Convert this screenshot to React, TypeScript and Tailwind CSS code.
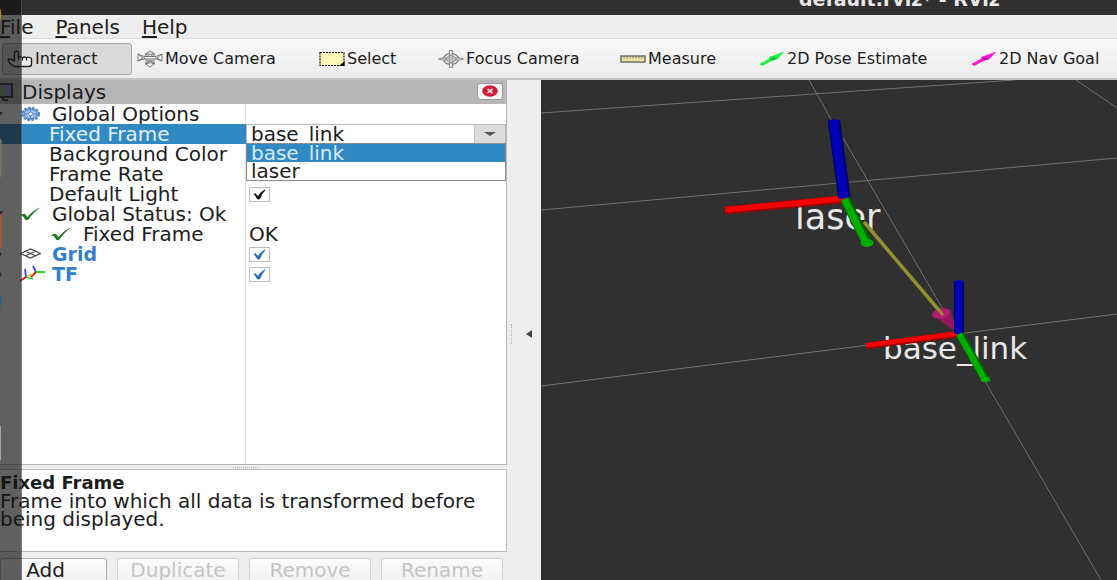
import { useState, type ReactNode } from "react";

function HandIcon() {
  return (
    <svg width="26" height="18" viewBox="0 0 26 18" fill="#eee" stroke="#222" strokeWidth="1.4" strokeLinejoin="round">
      <path d="M7.500 16.500Q5 15.500 1.500 11.500Q0.500 9 3 9L7.500 11V2.500Q9.500 -0.500 11.500 2.500V8Q13.500 5.500 15.500 8Q17.500 6 19.500 8Q21.500 6 24.500 8.500V14Q24.500 16.500 22 16.500Z" />
      <path d="M11.500 7V10M15.500 8V10.500M19.500 8V10.500" fill="none" strokeWidth="1.100" />
    </svg>
  );
}

function MoveIcon() {
  return (
    <svg width="26" height="18" viewBox="0 0 26 18" fill="#f4f4f4" stroke="#7a7a7a" strokeWidth="1">
      <path d="M13 1L18 4H15V7H11V4H8ZM13 17L18 13.500H15V11H11V13.500H8Z" />
      <path d="M1 4L7 6.500H19L25 4V11L19 9H7L1 11Z" />
      <path d="M1 4L6 8L1 11M25 4L20 8L25 11" fill="none" />
      <ellipse cx="13" cy="7.500" rx="6" ry="3.500" fill="none" />
      <path d="M8 12Q13 14 18 12" fill="none" />
    </svg>
  );
}

function SelectIcon() {
  return (
    <svg width="26" height="18" viewBox="0 0 26 18">
      <rect x="1" y="2.500" width="24" height="13" fill="#fcf6b8" stroke="#111" strokeWidth="1.200" strokeDasharray="2 1" />
      <path d="M25.500 11V16H20Z" fill="#000" />
    </svg>
  );
}

function FocusIcon() {
  return (
    <svg width="26" height="18" viewBox="0 0 26 18" fill="none" stroke="#888">
      <ellipse cx="13" cy="9" rx="7.500" ry="5.500" strokeWidth="1.400" />
      <ellipse cx="13" cy="9" rx="4.500" ry="3.200" />
      <path d="M11.500 0.500H14.500V5H11.500ZM11.500 13H14.500V17.500H11.500ZM0.500 9L4 8H8V10H4ZM25.500 9L22 8H18V10H22Z" fill="#eee" />
      <path d="M11.500 5.500V12.500M14.500 5.500V12.500M8 8H18M8 10H18" strokeWidth="0.800" />
    </svg>
  );
}

function MeasureIcon() {
  return (
    <svg width="26" height="18" viewBox="0 0 26 18">
      <rect x="1" y="6" width="24" height="6" fill="#efe3a6" stroke="#666" strokeWidth="1.400" />
      <path d="M4 6V8.500M7 6V8.500M10 6V8.500M13 6V8.500M16 6V8.500M19 6V8.500M22 6V8.500" stroke="#777" />
    </svg>
  );
}

function ArrowIcon({ light, dark }: { light: string; dark: string }) {
  return (
    <svg width="26" height="18" viewBox="0 0 26 18">
      <path d="M0.500 14L10.500 8.500L10 7L25.500 1.500L18 9.500L13.500 10.500L3 16Z" fill={light} />
      <path d="M11 8.500L15 7L17 9L13.500 10.500Z" fill={dark} />
    </svg>
  );
}

function GearIcon() {
  return (
    <svg width="21" height="16" viewBox="0 0 21 16">
      <ellipse cx="10.500" cy="8" rx="8.500" ry="6.200" fill="#8fb4e3" stroke="#4d83ca" strokeWidth="2" strokeDasharray="2.500 1.500" />
      <ellipse cx="10.500" cy="8" rx="6.500" ry="4.600" fill="#a8c6ec" stroke="#4d83ca" />
      <ellipse cx="10.500" cy="8" rx="2.500" ry="1.900" fill="#fff" stroke="#4d83ca" />
      <path d="M4 8H8M13 8H17M10.500 3.500V6M10.500 10V12.500" stroke="#4d83ca" />
    </svg>
  );
}

function TickIcon() {
  return (
    <svg width="21" height="16" viewBox="0 0 21 16">
      <path d="M0 9.500Q3 7 5 8L7.500 11Q13 4 20.500 1.500Q13 6.500 8.500 13.500Q6.500 15 5 13.500Q3.500 9.500 0 9.500Z" fill="#217a21" />
    </svg>
  );
}

function GridIcon() {
  return (
    <svg width="21" height="16" viewBox="0 0 21 16" fill="none" stroke="#444" strokeWidth="1.200">
      <path d="M0.500 7.500L10.500 3L20.500 7.500L10.500 12ZM5.500 5.300L15.500 9.700M15.500 5.300L5.500 9.700" />
    </svg>
  );
}

function TfIcon() {
  return (
    <svg width="25" height="18" viewBox="0 0 25 18" strokeWidth="1.800" fill="none">
      <path d="M6 12L5 4M16 7L13 1" stroke="#3a3aff" />
      <path d="M6 12L13 14M16 7H25" stroke="#1ee01e" />
      <path d="M6 12L0 16M16 7L11 12" stroke="#e01010" />
      <path d="M7 11L13 9" stroke="#e6c832" />
    </svg>
  );
}

function MonitorIcon() {
  return (
    <svg width="18" height="20" viewBox="0 0 18 20">
      <rect x="-1" y="2" width="13" height="13" fill="#9a93c4" stroke="#111" strokeWidth="1.500" />
      <path d="M0 4H4V13H0Z" fill="#7fb37a" />
      <path d="M3 15V18H8" stroke="#111" strokeWidth="1.500" fill="none" />
    </svg>
  );
}

const tools: { label: string; width: string; icon: ReactNode }[] = [
  { label: "Interact", width: "w-[130px]", icon: <HandIcon /> },
  { label: "Move Camera", width: "w-[182px]", icon: <MoveIcon /> },
  { label: "Select", width: "w-[119px]", icon: <SelectIcon /> },
  { label: "Focus Camera", width: "w-[182px]", icon: <FocusIcon /> },
  { label: "Measure", width: "w-[139px]", icon: <MeasureIcon /> },
  { label: "2D Pose Estimate", width: "w-[212px]", icon: <ArrowIcon light="#1df23c" dark="#0fae2c" /> },
  { label: "2D Nav Goal", width: "w-[150px]", icon: <ArrowIcon light="#ff14d8" dark="#b3109c" /> },
];

function Toolbar() {
  const [active, setActive] = useState("Interact");
  return (
    <div className="flex h-[42px] shrink-0 items-center border-t border-b-2 border-t-[#dcdcdc] border-b-[#c4c4c4] bg-gradient-to-b from-[#f9f9f9] to-[#ececec] pl-0.5">
      {tools.map((t) => (
        <button
          key={t.label}
          type="button"
          aria-pressed={active === t.label}
          onClick={() => setActive(t.label)}
          className={`${t.width} flex h-8 shrink-0 items-center gap-0.5 rounded-[3px] border pl-1 text-[16px] whitespace-nowrap ${
            active === t.label ? "border-[#a5a5a5] bg-[#dadada]" : "border-transparent"
          }`}
        >
          {t.icon}
          {t.label}
        </button>
      ))}
    </div>
  );
}

function Check({ label, dark }: { label: string; dark?: boolean }) {
  const [on, setOn] = useState(true);
  return (
    <label className="ml-[3px] grid h-[15px] w-[21px]">
      <input
        type="checkbox"
        aria-label={label}
        checked={on}
        onChange={() => setOn(!on)}
        className="col-start-1 row-start-1 h-[15px] w-[21px] appearance-none border border-[#bdbdbd] bg-white"
      />
      {on && (
        <svg width="21" height="15" viewBox="0 0 21 15" className="pointer-events-none col-start-1 row-start-1">
          <path d="M5 7L6.500 6.800L9 9.500Q11.500 5 16 2.800Q12.500 7 10.500 12H8.500Q7 9 5 7Z" fill={dark ? "#111" : "#2468ad"} stroke={dark ? "#111" : "#2468ad"} strokeWidth="0.800" />
        </svg>
      )}
    </label>
  );
}

function Row({ name, value, icon, indent, selected, bold }: {
  name: string;
  value?: ReactNode;
  icon?: ReactNode;
  indent: string;
  selected?: boolean;
  bold?: boolean;
}) {
  return (
    <div role="row" className="grid h-5 shrink-0 grid-cols-[246px_1fr]">
      <div
        role="gridcell"
        className={`flex items-center border-r leading-5 whitespace-nowrap ${indent} ${
          selected ? "border-[#3189c4] bg-[#3189c4] text-[#e4f0f8]" : "border-[#e2e2e2]"
        }`}
      >
        {icon && <span className="flex w-8 shrink-0">{icon}</span>}
        <span className={bold ? "text-[19px] font-bold text-[#337fcd]" : ""}>{name}</span>
      </div>
      <div role="gridcell" className="flex items-center leading-5">{value}</div>
    </div>
  );
}

function FrameSelect() {
  const [frame, setFrame] = useState("base_link");
  return (
    <div className="relative h-full w-full">
      <div className="flex h-full w-full border border-[#b8b8b8] bg-white">
        <select
          aria-label="Fixed Frame"
          value={frame}
          onChange={(e) => setFrame(e.target.value)}
          className="h-[18px] min-w-0 flex-1 appearance-none bg-white pl-1 leading-[18px]"
        >
          <option>base_link</option>
          <option>laser</option>
        </select>
        <span className="pointer-events-none flex w-[31px] items-center justify-center border-l border-[#c4c4c4] bg-[#dcdcdc]">
          <svg width="12" height="4" viewBox="0 0 12 4"><path d="M0 0H12L6 4Z" fill="#555" /></svg>
        </span>
      </div>
      <ul role="listbox" aria-label="Frames" className="absolute top-[19px] right-0 left-0 z-10 border border-[#8c8c8c] bg-white">
        {["base_link", "laser"].map((f) => (
          <li
            key={f}
            role="option"
            aria-selected={f === frame}
            onClick={() => setFrame(f)}
            className={`h-[18px] pl-1 leading-[18px] ${f === frame ? "bg-[#3189c4] text-[#d9eaf6]" : ""}`}
          >
            {f}
          </li>
        ))}
      </ul>
    </div>
  );
}

function Displays() {
  return (
    <section className="flex w-[507px] shrink-0 flex-col text-[20px]">
      <header className="flex h-6 shrink-0 items-center bg-[#b7b7b7] pr-1">
        <span className="flex w-[22px]"><MonitorIcon /></span>
        <h2 className="flex-1 leading-6">Displays</h2>
        <button type="button" aria-label="Close Displays" className="mb-0.5 flex h-[17px] w-[26px] items-center justify-center rounded-[3px] border border-[#999] bg-[#f6f6f6]">
          <svg width="16" height="12" viewBox="0 0 16 12">
            <ellipse cx="8" cy="6" rx="7.800" ry="5.700" fill="#cf1b37" />
            <path d="M5.500 4L10.500 8M10.500 4L5.500 8" stroke="#f6cfd5" strokeWidth="1.800" />
          </svg>
        </button>
      </header>
      <div role="treegrid" aria-label="Displays" className="flex min-h-0 flex-1 flex-col border-r border-b border-[#b5b5b5] bg-white">
        <Row name="Global Options" indent="pl-5" icon={<GearIcon />} />
        <Row name="Fixed Frame" indent="pl-[49px]" selected value={<FrameSelect />} />
        <Row name="Background Color" indent="pl-[49px]" />
        <Row name="Frame Rate" indent="pl-[49px]" />
        <Row name="Default Light" indent="pl-[49px]" value={<Check label="Default Light" dark />} />
        <Row name="Global Status: Ok" indent="pl-5" icon={<TickIcon />} />
        <Row name="Fixed Frame" indent="pl-[51px]" icon={<TickIcon />} value={<span className="pl-[3px]">OK</span>} />
        <Row name="Grid" indent="pl-5" icon={<GridIcon />} bold value={<Check label="Grid" />} />
        <Row name="TF" indent="pl-5" icon={<TfIcon />} bold value={<Check label="TF" />} />
        <div className="w-[246px] flex-1 border-r border-[#e2e2e2]" />
      </div>
      <div className="flex h-1 shrink-0 items-center justify-center pr-4">
        <span className="w-[25px] border-t border-dotted border-[#aaa]" />
      </div>
      <div className="h-[83px] shrink-0 overflow-hidden border border-l-0 border-[#bcbcbc] bg-white pt-1 leading-[18px] whitespace-nowrap">
        <h3 className="text-[18px] font-bold">Fixed Frame</h3>
        <p>Frame into which all data is transformed before<br />being displayed.</p>
      </div>
      <div className="grid h-7 shrink-0 grid-cols-[107px_repeat(3,1fr)] gap-2.5 overflow-hidden pt-1.5 pr-1">
        {["Add", "Duplicate", "Remove", "Rename"].map((b, i) => (
          <button
            key={b}
            type="button"
            disabled={i > 0}
            className={`flex h-7 items-center justify-center rounded-[3px] border bg-gradient-to-b from-[#fcfcfc] to-[#efefef] pb-1 ${
              i > 0 ? "border-[#cfcfcf] text-[#c4c4c4]" : "border-[#adadad] pr-4"
            }`}
          >
            {b}
          </button>
        ))}
      </div>
    </section>
  );
}

function Scene() {
  return (
    <main className="min-w-0 flex-1 overflow-hidden bg-[#303030]">
      <svg className="h-full w-full" viewBox="541 80 576 500" preserveAspectRatio="xMinYMin slice">
        <g stroke="#717171" strokeWidth="1" fill="none">
          <path d="M541 113L1015 80M541 210L1117 158M541 386L1117 314M809 80L832 121M843 138L1101 580M1076 80L1117 108" />
        </g>
        <g fill="#e8e8e8" fontFamily="'DejaVu Sans', sans-serif">
          <text x="795" y="229" fontSize="35">laser</text>
          <text x="883" y="359" fontSize="31">base_link</text>
        </g>
        <path d="M864 222L943 315" stroke="#92902f" strokeWidth="3.500" />
        <path d="M932 314L950 309L957 333Z" fill="#95155f" />
        <ellipse cx="941" cy="313.500" rx="9" ry="5" fill="#b51a75" transform="rotate(-12 941 313.500)" />
        <path d="M937 308L943 315" stroke="#92902f" strokeWidth="3" />
        <g fill="none">
          <path d="M725 210.500L846 199" stroke="#a00000" strokeWidth="8" />
          <path d="M725 209.700L846 198.200" stroke="#f40000" strokeWidth="5.500" />
          <path d="M834 121L844.500 198" stroke="#00006e" strokeWidth="12.500" />
          <path d="M833.500 121L844 198" stroke="#0000b8" strokeWidth="9" />
          <path d="M845 199L867 243" stroke="#006800" strokeWidth="10" />
          <path d="M844.500 199L866 243" stroke="#00ae00" strokeWidth="7" />
          <path d="M866 346L959 334" stroke="#a00000" strokeWidth="6.500" />
          <path d="M866 345.300L959 333.300" stroke="#f40000" strokeWidth="4.500" />
          <path d="M959 282L959 334" stroke="#00006e" strokeWidth="10" />
          <path d="M958.500 282L958.500 334" stroke="#0000b8" strokeWidth="7" />
          <path d="M959.500 334L986 380" stroke="#006800" strokeWidth="8.500" />
          <path d="M959 334L985 380" stroke="#00ae00" strokeWidth="6" />
        </g>
        <ellipse cx="834" cy="121" rx="6" ry="1.800" fill="#0000b8" />
        <ellipse cx="867" cy="243" rx="6.500" ry="4" fill="#00ae00" />
        <ellipse cx="959" cy="282" rx="5" ry="1.800" fill="#0000b8" />
        <ellipse cx="985.500" cy="379.500" rx="4.800" ry="2.800" fill="#00ae00" />
      </svg>
    </main>
  );
}

function Dock() {
  return (
    <aside aria-hidden="true" className="pointer-events-none absolute inset-y-0 left-0 z-20 w-[22px] border-r border-white/20 bg-[#121212]/67">
      <svg width="6" height="580" viewBox="0 0 6 580">
        <path d="M0 8Q2.500 14 0 21Z" fill="#c08a2a" />
        <path d="M0 138Q2 140 1.500 144V172Q1 177 0 179Z" fill="#7d7664" />
        <path d="M0 213H1.500V247H0Z" fill="#b5532c" />
        <path d="M0 292Q3 301 0 309Z" fill="#24658c" />
        <path d="M0 426H1V460H0Z" fill="#aaa99a" />
        <path d="M0 112L3 112L0 116ZM0 211H4L0 215ZM0 252L2 254L0 257ZM0 272L2 274L0 277Z" fill="#2b2b2b" />
      </svg>
    </aside>
  );
}

export default function App() {
  return (
    <div className="relative flex h-screen flex-col overflow-hidden bg-[#eeeeee] font-['DejaVu_Sans',sans-serif] text-[#1c1c1c]">
      <header className="flex h-[15px] shrink-0 items-end overflow-hidden bg-[#322f30] pb-2 pl-[799px]">
        <h1 className="text-[19px] leading-4 font-bold whitespace-nowrap text-[#e8e8e8]">default.rviz* - RViz</h1>
      </header>
      <nav className="flex h-[23px] shrink-0 items-center gap-[22px] text-[20px] leading-[22px]">
        {["File", "Panels", "Help"].map((m) => (
          <button key={m} type="button">
            <span className="underline underline-offset-2">{m[0]}</span>
            {m.slice(1)}
          </button>
        ))}
      </nav>
      <Toolbar />
      <div className="flex min-h-0 flex-1">
        <Displays />
        <div className="flex w-[34px] shrink-0 items-center pt-2">
          <span className="ml-1 h-5 border-l border-dotted border-[#aaa]" />
          <button type="button" aria-label="Collapse panel" className="ml-3.5">
            <svg width="6" height="8" viewBox="0 0 6 8"><path d="M6 0V8L0 4Z" fill="#444" /></svg>
          </button>
        </div>
        <Scene />
      </div>
      <Dock />
    </div>
  );
}
